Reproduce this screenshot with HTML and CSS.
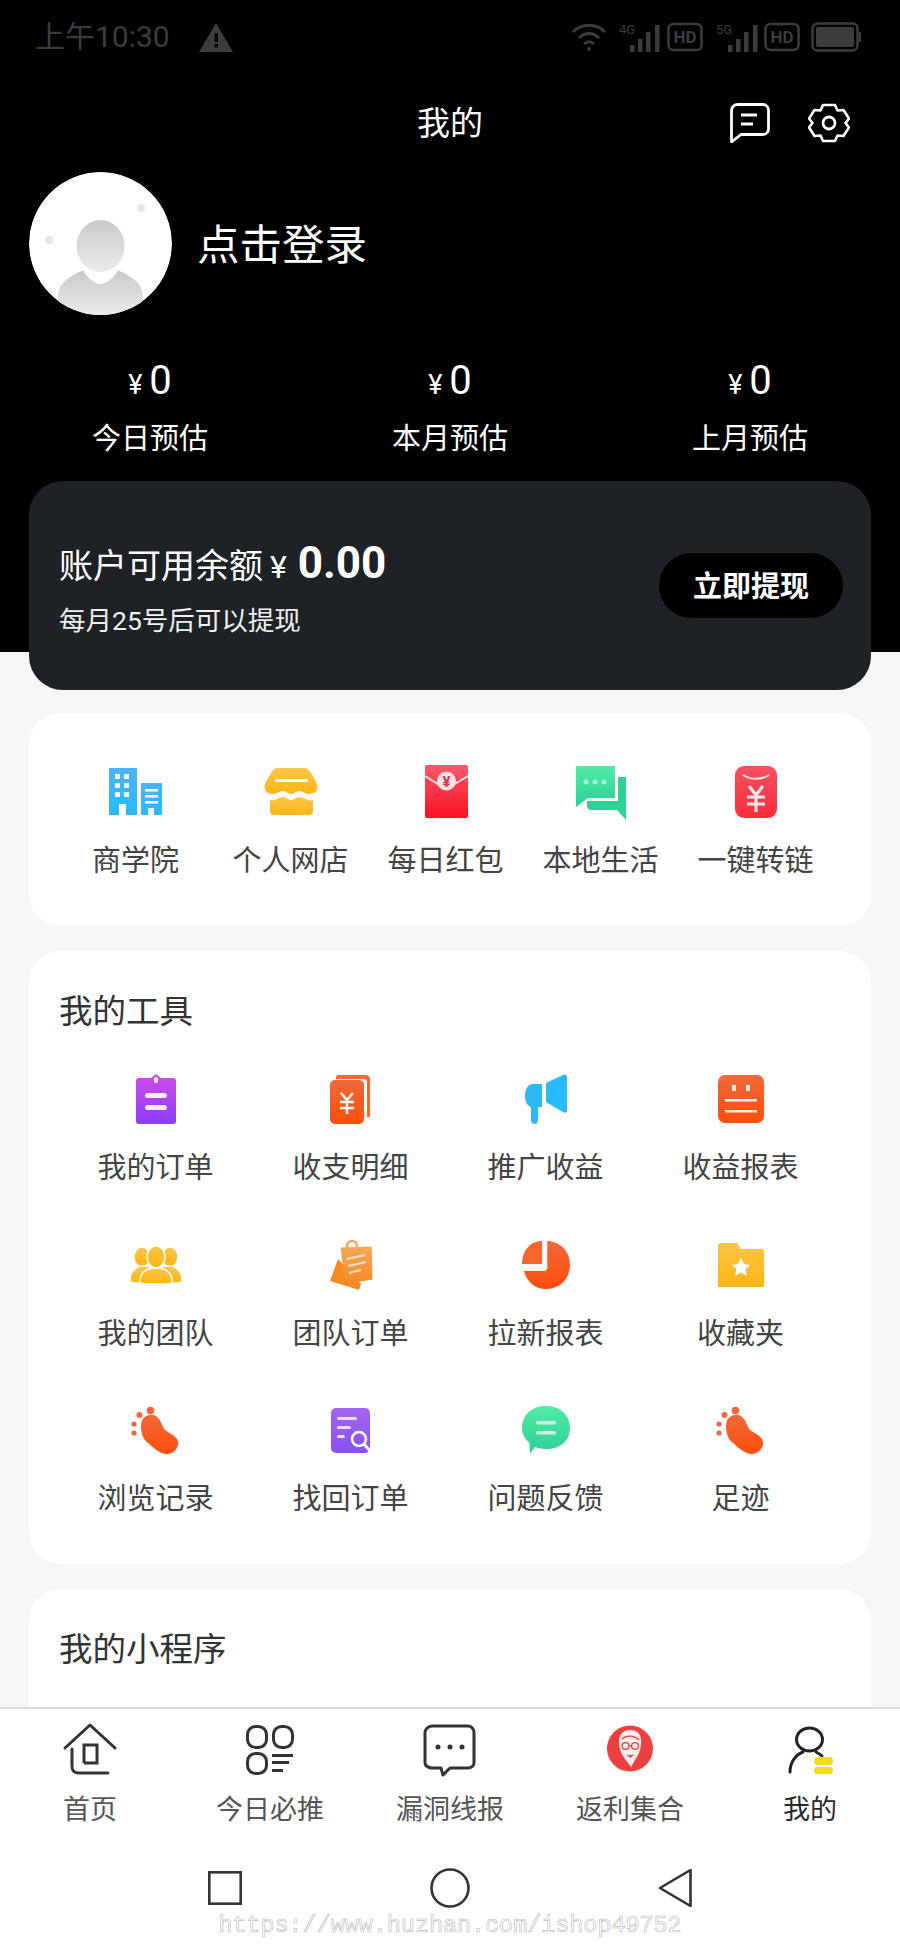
FILE: index.html
```html
<!DOCTYPE html>
<html lang="zh-CN">
<head>
<meta charset="utf-8">
<title>我的</title>
<link rel="stylesheet" href="styles.css">
</head>
<body>
<svg class="defs" aria-hidden="true">
  <defs>
    <linearGradient id="gBlue" x1="0" y1="0" x2="0" y2="1"><stop offset="0" stop-color="#4db4f5"/><stop offset="1" stop-color="#24bcff"/></linearGradient>
    <linearGradient id="gYellow" x1="0" y1="0" x2="0" y2="1"><stop offset="0" stop-color="#f9c54a"/><stop offset="1" stop-color="#ffb60f"/></linearGradient>
    <linearGradient id="gRed" x1="0" y1="0" x2="0" y2="1"><stop offset="0" stop-color="#f95a68"/><stop offset="1" stop-color="#fb0f25"/></linearGradient>
    <linearGradient id="gRed2" x1="0" y1="0" x2="0" y2="1"><stop offset="0" stop-color="#f8505f"/><stop offset="1" stop-color="#fb2c3c"/></linearGradient>
    <linearGradient id="gGreen" x1="0" y1="0" x2="0" y2="1"><stop offset="0" stop-color="#53eba6"/><stop offset="1" stop-color="#2dcf95"/></linearGradient>
    <linearGradient id="gPurple" x1="0" y1="0" x2="0" y2="1"><stop offset="0" stop-color="#d04ce8"/><stop offset="1" stop-color="#8a3df5"/></linearGradient>
    <linearGradient id="gOrange" x1="0" y1="0" x2="0" y2="1"><stop offset="0" stop-color="#f0693a"/><stop offset="1" stop-color="#ff4d0c"/></linearGradient>
    <linearGradient id="gNote" x1="0" y1="0" x2="0" y2="1"><stop offset="0" stop-color="#f6a75a"/><stop offset="1" stop-color="#f68a24"/></linearGradient>
    <linearGradient id="gViolet" x1="0" y1="0" x2="0" y2="1"><stop offset="0" stop-color="#a766ec"/><stop offset="1" stop-color="#8650f4"/></linearGradient>
    <linearGradient id="gHead" x1="0" y1="0" x2="0" y2="1"><stop offset="0" stop-color="#c9c9c9"/><stop offset="1" stop-color="#ececec"/></linearGradient>
    <symbol id="foot" viewBox="0 0 60 60">
      <circle cx="24.500" cy="10.500" r="3.800" fill="#f2683a"/><circle cx="13.500" cy="15" r="3" fill="#f2683a"/><circle cx="8" cy="24" r="2.600" fill="#f2683a"/><circle cx="8" cy="33" r="2.600" fill="#f2683a"/>
      <path d="M15 26C15 17 22 14 27 15C33 16 35 22 37 27C39 32 47 33 51 39C55 46 48 54 41 54C33 54 27 47 22 43C17 39 15 33 15 26Z" fill="url(#gOrange)"/>
    </symbol>
  </defs>
</svg>
<div class="page">
  <div class="scroll">
    <section class="hero">
      <div class="status">
        <div class="status-left">
          <span class="clock">上午10:30</span>
          <svg class="warn" viewBox="0 0 34 29"><path d="M17 0L34 29H0Z" fill="#3c3c3c"/><rect x="15.500" y="10" width="3.400" height="9" fill="#000"/><rect x="15.500" y="21" width="3.400" height="3.400" fill="#000"/></svg>
        </div>
        <svg class="status-right" viewBox="0 0 290 30">
          <g fill="none" stroke="#3c3c3c" stroke-width="3"><path d="M2 10C11 1 25 1 34 10"/><path d="M8 16C14 10 22 10 28 16"/><path d="M13 22C16 19 20 19 23 22"/></g>
          <circle cx="18" cy="27" r="2" fill="#3c3c3c"/>
          <text x="48" y="12" class="net">4G</text>
          <g fill="#3c3c3c"><rect x="59" y="23" width="4.500" height="7"/><rect x="67" y="17" width="4.500" height="13"/><rect x="75" y="10" width="4.500" height="20"/><rect x="84" y="3" width="4.500" height="27"/></g>
          <rect x="97.500" y="2" width="33" height="26" rx="5" fill="none" stroke="#3c3c3c" stroke-width="2.500"/>
          <text x="114" y="21" class="hd">HD</text>
          <text x="145" y="12" class="net">5G</text>
          <g fill="#3c3c3c"><rect x="157" y="23" width="4.500" height="7"/><rect x="165" y="17" width="4.500" height="13"/><rect x="173" y="10" width="4.500" height="20"/><rect x="182" y="3" width="4.500" height="27"/></g>
          <rect x="194.500" y="2" width="33" height="26" rx="5" fill="none" stroke="#3c3c3c" stroke-width="2.500"/>
          <text x="211" y="21" class="hd">HD</text>
          <rect x="241.500" y="1.500" width="45" height="27" rx="5" fill="none" stroke="#3c3c3c" stroke-width="2.500"/>
          <rect x="245" y="5" width="38" height="20" rx="2" fill="#3c3c3c"/>
          <rect x="287.500" y="10" width="2.500" height="10" rx="1.200" fill="#3c3c3c"/>
        </svg>
      </div>
      <div class="navbar">
        <span></span>
        <h1 class="nav-title">我的</h1>
        <div class="nav-actions">
          <svg class="nav-icon" viewBox="0 0 40 40"><path d="M8 1.500H33C36 1.500 38.500 4 38.500 7V26C38.500 29 36 31.500 33 31.500H11L1.500 39V8C1.500 4 4 1.500 8 1.500Z" fill="none" stroke="#fff" stroke-width="2.800" stroke-linejoin="round"/><path d="M11 12H27M11 21H23" stroke="#fff" stroke-width="2.800" fill="none"/></svg>
          <svg class="nav-icon gear" viewBox="0 0 42 40"><path d="M15 2H27L29.500 7.500L35.500 7L41 15.500L37.500 20L41 24.500L35.500 33L29.500 32.500L27 38H15L12.500 32.500L6.500 33L1 24.500L4.500 20L1 15.500L6.500 7L12.500 7.500Z" fill="none" stroke="#fff" stroke-width="2.600" stroke-linejoin="round"/><circle cx="21" cy="20" r="6" fill="none" stroke="#fff" stroke-width="2.800"/></svg>
        </div>
      </div>
      <div class="profile">
        <svg class="avatar" viewBox="0 0 143 143">
          <circle cx="71.500" cy="71.500" r="71.500" fill="#fff"/>
          <circle cx="112" cy="36" r="4" fill="#e6e6e6"/><circle cx="20" cy="68" r="4" fill="#e6e6e6"/>
          <ellipse cx="71.500" cy="74" rx="24" ry="26" fill="url(#gHead)"/>
          <path d="M29 143V125C29 110 42 104 54 98C58 106 66 112 71.500 112C77 112 85 106 89 98C101 104 114 110 114 125V143Z" fill="url(#gHead)"/>
        </svg>
        <span class="login">点击登录</span>
      </div>
      <div class="stats">
        <div class="stat"><div class="stat-value"><span class="yen">¥</span><span>0</span></div><div class="stat-label">今日预估</div></div>
        <div class="stat"><div class="stat-value"><span class="yen">¥</span><span>0</span></div><div class="stat-label">本月预估</div></div>
        <div class="stat"><div class="stat-value"><span class="yen">¥</span><span>0</span></div><div class="stat-label">上月预估</div></div>
      </div>
      <div class="balance">
        <div class="balance-text">
          <div class="balance-line"><span>账户可用余额</span><span class="balance-yen">¥</span><strong class="balance-num">0.00</strong></div>
          <div class="balance-note">每月25号后可以提现</div>
        </div>
        <div class="withdraw">立即提现</div>
      </div>
    </section>

    <section class="card quick">
      <div class="quick-item">
        <svg class="ico" viewBox="0 0 60 60"><rect x="3" y="6" width="28" height="47" rx="1" fill="url(#gBlue)"/><rect x="35" y="21" width="21" height="32" rx="1" fill="url(#gBlue)"/><g fill="#fff"><rect x="9" y="12" width="5" height="5"/><rect x="18" y="12" width="5" height="5"/><rect x="9" y="21" width="5" height="5"/><rect x="18" y="21" width="5" height="5"/><rect x="9" y="30" width="5" height="5"/><rect x="18" y="30" width="5" height="5"/><rect x="13" y="42" width="7" height="11"/><rect x="39" y="27" width="13" height="2.500"/><rect x="39" y="33" width="13" height="2.500"/><rect x="39" y="39" width="13" height="2.500"/><rect x="42" y="46" width="6" height="7"/></g></svg>
        <span class="quick-label">商学院</span>
      </div>
      <div class="quick-item">
        <svg class="ico" viewBox="0 0 60 60"><path d="M16 6H44C48 6 52 14 56 22C58 28 54 32 48 32C44 32 42 29 38 29C35 29 33 32 30 32C27 32 25 29 22 29C18 29 16 32 12 32C6 32 2 28 4 22C8 14 12 6 16 6Z" fill="url(#gYellow)"/><path d="M9 38C14 40 17 35 22 35C25 35 27 38 30 38C33 38 35 35 38 35C43 35 47 40 52 38V49C52 52 50 53 47 53H14C11 53 9 52 9 49Z" fill="url(#gYellow)"/><rect x="14" y="17" width="33" height="3" rx="1.500" fill="#fff"/></svg>
        <span class="quick-label">个人网店</span>
      </div>
      <div class="quick-item">
        <svg class="ico" viewBox="0 0 60 60"><rect x="9" y="3" width="43" height="53" rx="2" fill="url(#gRed)"/><path d="M9 14L30 27L52 14" fill="none" stroke="#fff" stroke-width="2" opacity=".85"/><circle cx="30.500" cy="19" r="9.500" fill="#fde3e6"/><text x="30.500" y="25" class="yen-mark">¥</text></svg>
        <span class="quick-label">每日红包</span>
      </div>
      <div class="quick-item">
        <svg class="ico" viewBox="0 0 60 60"><path d="M6 4H44V36H17L5 45V5Z" fill="url(#gGreen)"/><path d="M47 15H55V58L46 48H20C18 48 16 46 16 44V39H47Z" fill="#2fd197"/><g fill="#a8f5d4"><circle cx="15" cy="20" r="2.500"/><circle cx="24" cy="20" r="2.500"/><circle cx="33" cy="20" r="2.500"/></g></svg>
        <span class="quick-label">本地生活</span>
      </div>
      <div class="quick-item">
        <svg class="ico" viewBox="0 0 60 60"><rect x="9" y="4" width="42" height="52" rx="9" fill="url(#gRed2)"/><path d="M17 13C25 18 35 18 43 13" fill="none" stroke="#fff" stroke-width="2" opacity=".85"/><path d="M23 24L30 33L37 24M21 35H39M21 42H39M30 33V50" fill="none" stroke="#fff" stroke-width="3" opacity=".9"/></svg>
        <span class="quick-label">一键转链</span>
      </div>
    </section>

    <section class="card tools">
      <h2 class="card-title">我的工具</h2>
      <div class="tool-grid">
        <div class="tool">
          <svg class="ico" viewBox="0 0 60 60"><path d="M13 9H25L30 5L35 9H47C49 9 50 10 50 12V52C50 54 49 55 47 55H13C11 55 10 54 10 52V12C10 10 11 9 13 9Z" fill="url(#gPurple)"/><ellipse cx="30" cy="11" rx="2" ry="3" fill="#fff"/><rect x="19" y="24" width="22" height="5" rx="2.500" fill="#fff" opacity=".9"/><rect x="19" y="36" width="22" height="5" rx="2.500" fill="#fff" opacity=".9"/></svg>
          <span class="tool-label">我的订单</span>
        </div>
        <div class="tool">
          <svg class="ico" viewBox="0 0 60 60"><path d="M17 6H45C47 6 49 8 49 10V48H46V13C46 11 44 10 42 10H15C15 8 15 6 17 6Z" fill="#f4692f"/><rect x="9" y="11" width="34" height="44" rx="5" fill="url(#gOrange)"/><path d="M20 24L26 31L32 24M19 33H33M19 39H33M26 31V45" fill="none" stroke="#fff" stroke-width="2.400"/></svg>
          <span class="tool-label">收支明细</span>
        </div>
        <div class="tool">
          <svg class="ico" viewBox="0 0 60 60"><path d="M17 15H26V38H22V51C22 54 20 55 19 55C17 55 15 54 15 51V38C11 37 9 32 9 27C9 20 12 15 17 15Z" fill="#2eb8f5"/><path d="M30 14L47 6C49 5 51 6 51 8V42C51 44 49 44 47 43L30 33Z" fill="#28baff"/></svg>
          <span class="tool-label">推广收益</span>
        </div>
        <div class="tool">
          <svg class="ico" viewBox="0 0 60 60"><rect x="7" y="6" width="46" height="48" rx="7" fill="url(#gOrange)"/><g fill="#fff" opacity=".92"><rect x="21" y="16" width="4" height="6"/><rect x="35" y="16" width="4" height="6"/><rect x="14" y="30" width="32" height="2.500"/><rect x="14" y="41" width="32" height="2.500"/></g></svg>
          <span class="tool-label">收益报表</span>
        </div>
        <div class="tool">
          <svg class="ico" viewBox="0 0 60 60"><g fill="url(#gYellow)" stroke="#fff" stroke-width="1.500"><ellipse cx="16" cy="22" rx="8" ry="10"/><ellipse cx="44" cy="22" rx="8" ry="10"/><path d="M4 45C4 36 10 31 18 31C26 31 32 36 32 48H8C6 48 4 47 4 45Z"/><path d="M56 45C56 36 50 31 42 31C34 31 28 36 28 48H52C54 48 56 47 56 45Z"/><ellipse cx="30" cy="22" rx="9" ry="11"/><path d="M14 46C14 37 21 33 30 33C39 33 46 37 46 46C46 48 45 49 43 49H17C15 49 14 48 14 46Z"/></g></svg>
          <span class="tool-label">我的团队</span>
        </div>
        <div class="tool">
          <svg class="ico" viewBox="0 0 60 60"><path d="M17 24L9 46L38 55L40 49Z" fill="#f68a24"/><path d="M19 13L50 11L52 44L25 49Z" fill="url(#gNote)" transform="rotate(2 35 30)"/><circle cx="31" cy="11" r="5" fill="none" stroke="#f6a75a" stroke-width="2.500"/><g stroke="#fff" stroke-width="2" opacity=".75"><path d="M26 24L44 20"/><path d="M27 31L45 27"/><path d="M28 38L40 35"/></g></svg>
          <span class="tool-label">团队订单</span>
        </div>
        <div class="tool">
          <svg class="ico" viewBox="0 0 60 60"><path d="M26 6C14 6 6 16 6 29L26 29Z" fill="#f9642a"/><path d="M30 6C44 6 54 16 54 30C54 44 44 54 30 54C19 54 11 47 8 36L30 36Z" fill="url(#gOrange)"/><path d="M30 6V33H6" fill="none" stroke="#fff" stroke-width="2.500"/></svg>
          <span class="tool-label">拉新报表</span>
        </div>
        <div class="tool">
          <svg class="ico" viewBox="0 0 60 60"><path d="M10 8H26L30 14H50C52 14 53 15 53 17V50C53 52 52 52 50 52H9C7 52 7 52 7 50V11C7 9 8 8 10 8Z" fill="url(#gYellow)"/><path d="M30 23L33 29L39 30L34.500 34L36 41L30 37.500L24 41L25.500 34L21 30L27 29Z" fill="#fff"/></svg>
          <span class="tool-label">收藏夹</span>
        </div>
        <div class="tool">
          <svg class="ico"><use href="#foot"/></svg>
          <span class="tool-label">浏览记录</span>
        </div>
        <div class="tool">
          <svg class="ico" viewBox="0 0 60 60"><rect x="10" y="8" width="39" height="45" rx="5" fill="url(#gViolet)"/><g fill="#fff" opacity=".8"><rect x="16" y="17" width="20" height="3" rx="1.500"/><rect x="16" y="26" width="14" height="3" rx="1.500"/><rect x="16" y="35" width="8" height="3" rx="1.500"/></g><circle cx="38" cy="39" r="7" fill="none" stroke="#fff" stroke-width="2.600"/><path d="M43 44L49 51" stroke="#fff" stroke-width="2.800"/></svg>
          <span class="tool-label">找回订单</span>
        </div>
        <div class="tool">
          <svg class="ico" viewBox="0 0 60 60"><path d="M30 6C43 6 54 14 54 28C54 42 43 49 30 49C26 49 22 48 19 47L14 54L13.500 43C9 39 6 34 6 28C6 14 17 6 30 6Z" fill="url(#gGreen)"/><rect x="20" y="21" width="20" height="3.500" rx="1.500" fill="#c5f5e0"/><rect x="20" y="31" width="20" height="3.500" rx="1.500" fill="#c5f5e0"/></svg>
          <span class="tool-label">问题反馈</span>
        </div>
        <div class="tool">
          <svg class="ico"><use href="#foot"/></svg>
          <span class="tool-label">足迹</span>
        </div>
      </div>
    </section>

    <section class="card mini">
      <h2 class="card-title">我的小程序</h2>
    </section>
  </div>

  <footer class="tabbar">
    <nav class="tabs">
      <div class="tab">
        <svg class="tab-icon" viewBox="0 0 56 56"><path d="M3 26L28 3L53 26" fill="none" stroke="#333" stroke-width="3" stroke-linejoin="round" stroke-linecap="round"/><path d="M10 27V44C10 49 12 51 17 51H46" fill="none" stroke="#333" stroke-width="3" stroke-linecap="round"/><path d="M22 41V23H35V41H22" fill="none" stroke="#333" stroke-width="3"/></svg>
        <span class="tab-label">首页</span>
      </div>
      <div class="tab">
        <svg class="tab-icon" viewBox="0 0 56 56"><g fill="none" stroke="#333" stroke-width="3"><rect x="5.500" y="4.500" width="19" height="21" rx="8"/><rect x="31.500" y="4.500" width="19" height="21" rx="8"/><rect x="5.500" y="31.500" width="19" height="20" rx="8"/></g><g fill="#333"><rect x="30" y="32" width="21" height="3"/><rect x="30" y="39" width="17" height="3"/><rect x="30" y="47" width="11" height="3"/></g></svg>
        <span class="tab-label">今日必推</span>
      </div>
      <div class="tab">
        <svg class="tab-icon" viewBox="0 0 56 56"><path d="M10 4H46C49 4 52 7 52 10V41C52 44 49 46 46 46H28L21 53L19 46H10C7 46 3 44 3 41V10C3 7 7 4 10 4Z" fill="none" stroke="#333" stroke-width="3" stroke-linejoin="round"/><g fill="#333"><circle cx="16" cy="25" r="2.500"/><circle cx="28" cy="25" r="2.500"/><circle cx="40" cy="25" r="2.500"/></g></svg>
        <span class="tab-label">漏洞线报</span>
      </div>
      <div class="tab">
        <svg class="tab-icon" viewBox="0 0 56 56"><circle cx="28" cy="26.500" r="23" fill="#ec3f42"/><path d="M17 22C16 12 22 8 28.500 8C36 8 40 13 39 22C38.500 29 36 34 33.500 37L29 45L23 37C20 33 17.500 28 17 22Z" fill="#fdeeee"/><path d="M20 17C24 13 32 13 37 18" fill="none" stroke="#ec3f42" stroke-width="1.200"/><g fill="none" stroke="#ec3f42" stroke-width="1.300"><circle cx="23.500" cy="24" r="3.400"/><circle cx="33" cy="24" r="3.400"/><path d="M26.900 24H29.600"/></g><path d="M24 32C26 33.500 31 33.500 33 32L28.500 36Z" fill="#ec3f42"/></svg>
        <span class="tab-label">返利集合</span>
      </div>
      <div class="tab">
        <svg class="tab-icon" viewBox="0 0 56 56"><ellipse cx="27.500" cy="17.500" rx="13" ry="11.500" fill="none" stroke="#222" stroke-width="3"/><path d="M8 50C8 41 13 33 21 30" fill="none" stroke="#222" stroke-width="3" stroke-linecap="round"/><path d="M34 30C36 31 38 32 40 34" fill="none" stroke="#222" stroke-width="3" stroke-linecap="round"/><rect x="32" y="35" width="19" height="8" rx="4" fill="#f7d91f"/><rect x="32" y="45" width="19" height="7" rx="3.500" fill="#f7d91f"/></svg>
        <span class="tab-label tab-active">我的</span>
      </div>
    </nav>
    <div class="sysnav">
      <svg class="sys sys-square" viewBox="0 0 34 34"><rect x="1.300" y="1.300" width="31.400" height="31.400" fill="none" stroke="#333" stroke-width="2.600"/></svg>
      <svg class="sys sys-circle" viewBox="0 0 40 40"><circle cx="20" cy="20" r="18.500" fill="none" stroke="#333" stroke-width="2.600"/></svg>
      <svg class="sys sys-back" viewBox="0 0 34 40"><path d="M32.500 2V38L2 20Z" fill="none" stroke="#333" stroke-width="2.600" stroke-linejoin="round"/></svg>
    </div>
    <div class="watermark">https://www.huzhan.com/ishop49752</div>
  </footer>
</div>
</body>
</html>
```

FILE: styles.css
```css
* { box-sizing: border-box; }
html, body { margin: 0; padding: 0; }
body { font-family: Roboto, "Noto Sans CJK SC", sans-serif; background: #f6f6f7; color: #333; }
.defs { position: absolute; width: 0; height: 0; }
.page { width: 900px; height: 1950px; display: flex; flex-direction: column; overflow: hidden; }
.scroll { flex: 1; min-height: 0; overflow: hidden; }

.hero { height: 652px; background: #000; color: #fff; }
.status { height: 74px; padding: 0 39px 0 35px; display: flex; align-items: center; justify-content: space-between; }
.status-left { display: flex; align-items: center; gap: 29px; }
.clock { font-size: 30px; color: #3c3c3c; line-height: 30px; }
.warn { width: 34px; height: 29px; }
.status-right { width: 290px; height: 30px; margin-top: -1px; overflow: visible; }
.net { font: 13px "Roboto", sans-serif; fill: #3c3c3c; }
.hd { font: 700 17px "Roboto", sans-serif; fill: #3c3c3c; text-anchor: middle; }

.navbar { height: 98px; display: grid; grid-template-columns: 1fr auto 1fr; align-items: center; padding: 0 50px; }
.nav-title { margin: 0; font-size: 33px; font-weight: 400; line-height: 40px; padding-top: 2px; }
.nav-actions { display: flex; justify-content: flex-end; gap: 38px; align-items: center; }
.nav-icon { width: 40px; height: 40px; }
.nav-icon.gear { width: 42px; }

.profile { height: 143px; padding-left: 29px; display: flex; align-items: center; gap: 25px; }
.avatar { width: 143px; height: 143px; border-radius: 50%; }
.login { font-size: 42.500px; line-height: 50px; padding-top: 5px; }

.stats { margin-top: 41px; display: grid; grid-template-columns: repeat(3, 300px); }
.stat { text-align: center; }
.stat-value { height: 50px; display: flex; justify-content: center; align-items: baseline; gap: 7px; font-size: 40px; line-height: 50px; }
.yen { font-size: 27px; }
.stat-label { margin-top: 13px; font-size: 29px; line-height: 40px; }

.balance { margin: 22px 29px 0; height: 209px; border-radius: 34px; background: #1e2126; padding: 0 28px 0 30px; display: flex; align-items: center; justify-content: space-between; position: relative; }
.balance-text { padding-top: 5px; }
.balance-line { display: flex; align-items: baseline; font-size: 34px; line-height: 50px; }
.balance-yen { font-size: 32px; margin: 0 11px 0 7px; }
.balance-num { font-size: 44px; font-weight: 700; }
.balance-note { margin-top: 11px; font-size: 26.500px; line-height: 36px; color: #f0f0f0; }
.withdraw { width: 184px; height: 65px; border-radius: 33px; background: #000; color: #fff; font-size: 29px; font-weight: 700; display: flex; align-items: center; justify-content: center; padding-bottom: 4px; }

.card { margin: 0 29px; background: #fff; border-radius: 32px; }
.ico { width: 60px; height: 60px; display: block; }
.quick { margin-top: 61px; height: 213px; padding: 49px 0 0 29px; display: grid; grid-template-columns: repeat(5, 155px); align-items: start; }
.quick-item { display: flex; flex-direction: column; align-items: center; }
.quick-label { margin-top: 21px; font-size: 29px; line-height: 36px; color: #444; white-space: nowrap; }
.yen-mark { font: 700 15px Roboto, sans-serif; fill: #e8303c; text-anchor: middle; }

.tools { margin-top: 25px; height: 613px; padding: 39px 0 0 30px; }
.card-title { margin: 0; font-size: 33.500px; font-weight: 400; line-height: 44px; color: #333; }
.tool-grid { margin-top: 35px; display: grid; grid-template-columns: repeat(4, 195px); grid-auto-rows: 165.500px; margin-left: -1px; }
.tool { display: flex; flex-direction: column; align-items: center; }
.tool-label { margin-top: 21px; font-size: 29px; line-height: 36px; color: #444; }

.mini { margin-top: 25px; height: 200px; padding: 39px 0 0 30px; }

.tabbar { flex: none; height: 243px; background: #fff; border-top: 2px solid #dcdcdc; }
.tabs { height: 118px; display: grid; grid-template-columns: repeat(5, 180px); padding-top: 13px; }
.tab { display: flex; flex-direction: column; align-items: center; }
.tab-icon { width: 56px; height: 56px; display: block; }
.tab-label { margin-top: 14px; font-size: 27px; line-height: 36px; color: #555; }
.tab-active { color: #2a2a2a; }
.sysnav { margin-top: 40px; height: 42px; display: grid; grid-template-columns: repeat(3, 225px); justify-content: center; align-items: center; justify-items: center; }
.sys { display: block; }
.sys-square { width: 34px; height: 34px; }
.sys-circle { width: 40px; height: 40px; }
.sys-back { width: 34px; height: 40px; }
.watermark { margin-top: 4px; text-align: center; font-family: "Liberation Mono", monospace; font-size: 23.400px; line-height: 26px; color: #fff; -webkit-text-stroke: .6px #b8b8b8; }
```
